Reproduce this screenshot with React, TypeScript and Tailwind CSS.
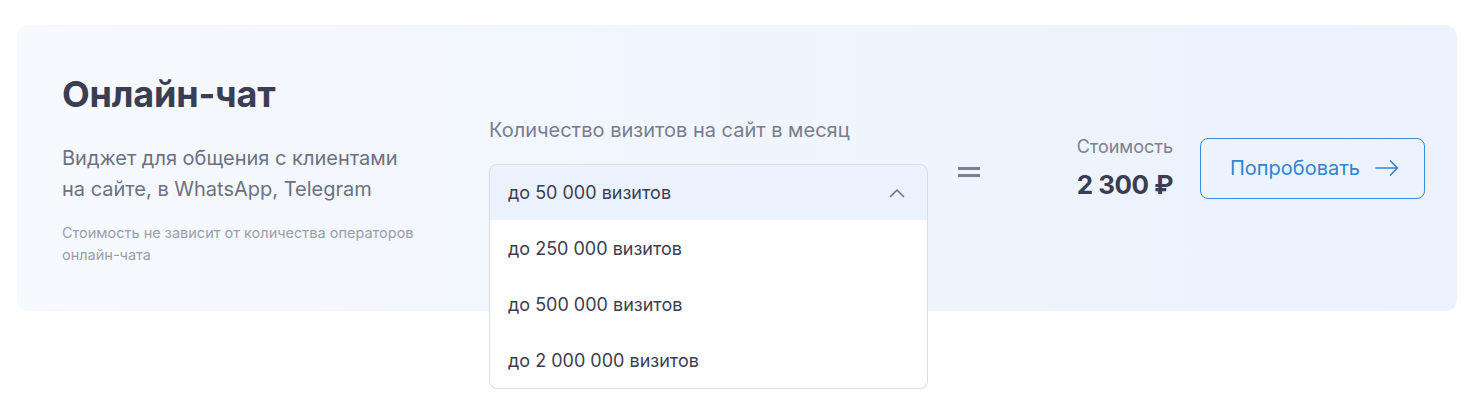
const options = ['до 250 000 визитов', 'до 500 000 визитов', 'до 2 000 000 визитов'];

export default function App() {
  return (
    <div className="min-h-[415px] bg-white pl-[17px] pr-[22px] pt-[25px] font-['Inter',sans-serif]">
      <div className="flex h-[286px] items-start rounded-[12px] bg-gradient-to-r from-[#f6f9fd] to-[#ebf2fe] pl-[45px] pr-[32px] pt-[45px]">
        <div className="w-[427px] shrink-0">
          <h2 className="text-[36px] font-bold leading-[48px] tracking-[-0.2px] text-[#3b3d55]">Онлайн-чат</h2>
          <p className="mt-[25px] text-[20px] leading-[31px] text-[#6c7183]">
            Виджет для общения с клиентами
            <br />
            на сайте, в WhatsApp, Telegram
          </p>
          <p className="mt-[17px] text-[14.5px] leading-[22px] text-[#9a9eac]">
            Стоимость не зависит от количества операторов
            <br />
            онлайн-чата
          </p>
        </div>

        <div className="mt-[47px] w-[439px] shrink-0">
          <div className="text-[20px] leading-[26px] text-[#787d8d]">Количество визитов на сайт в месяц</div>
          <div className="relative mt-[21px]">
            <div className="flex h-[56px] items-center justify-between rounded-t-[8px] border border-b-0 border-[#d9dde4] bg-[#ebf2fd] pl-[18px] pr-[22px] text-[18px] text-[#3b3d50]">
              <span>до 50 000 визитов</span>
              <svg width="16" height="10" viewBox="0 0 16 10" fill="none" stroke="#6c7183" strokeWidth="1.6" strokeLinecap="round" strokeLinejoin="round">
                <path d="M1.5 8.5 L8 2 L14.5 8.5" />
              </svg>
            </div>
            <div className="absolute left-0 right-0 top-[56px] rounded-b-[8px] border border-t-0 border-[#d9dde4] bg-white">
              {options.map((o) => (
                <div key={o} className="flex h-[56px] items-center pl-[18px] text-[18px] text-[#3b3d50]">
                  {o}
                </div>
              ))}
            </div>
          </div>
        </div>

        <div className="ml-[30px] mt-[97px] flex w-[22px] flex-col gap-[4px]">
          <div className="h-[3px] bg-[#7b8090]" />
          <div className="h-[3px] bg-[#7b8090]" />
        </div>

        <div className="ml-auto mt-[68px] flex items-center gap-[27px]">
          <div className="-mt-[3px] text-right">
            <div className="text-[18px] leading-[24px] text-[#7b8090]">Стоимость</div>
            <div className="mt-[10px] text-[26px] font-bold leading-[32px] tracking-[-0.5px] text-[#3b3d55]">2 300 ₽</div>
          </div>
          <button className="-mt-[3px] flex h-[61px] w-[225px] items-center justify-center gap-[15px] rounded-[8px] border border-[#3d8ad6] pl-[4px] text-[20px] text-[#2f84d4]">
            Попробовать
            <svg width="24" height="16" viewBox="0 0 24 16" fill="none" stroke="currentColor" strokeWidth="1.6" strokeLinecap="round" strokeLinejoin="round">
              <path d="M1 8 H22.5 M15.5 1 L22.5 8 L15.5 15" />
            </svg>
          </button>
        </div>
      </div>
    </div>
  );
}
